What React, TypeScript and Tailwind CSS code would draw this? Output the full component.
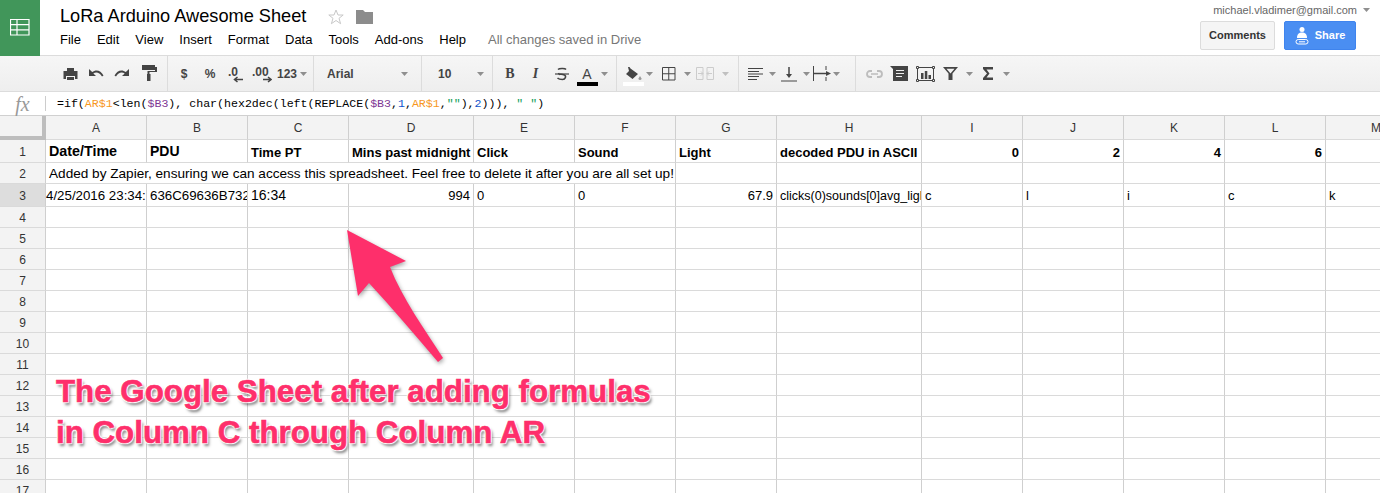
const Caret = ({ className = "" }: { className?: string }) => (
  <span className={`flex justify-center ${className}`}>
    <svg width="7" height="4" viewBox="0 0 7 4"><path d="M0 0h7L3.500 4z" fill="#8f8f8f" /></svg>
  </span>
)

const Ic = ({ w, h = 16, children }: { w: number; h?: number; children: React.ReactNode }) => (
  <svg width={w} height={h} viewBox={`0 0 ${w} ${h}`} fill="none">{children}</svg>
)

const Slot = ({ className, children }: { className: string; children: React.ReactNode }) => (
  <div className={`flex items-center justify-center shrink-0 h-full ${className}`}>{children}</div>
)

const dark = "#444"

function Toolbar() {
  return (
    <div className="flex h-[36px] border-b border-[#dcdcdc] bg-gradient-to-b from-[#f6f6f6] to-[#eeeeee] text-[#444] font-bold text-[12px]">
      <div className="flex w-[168px] pl-[57px] border-r border-[#dcdcdc]">
        <Slot className="w-[26px]">
          <Ic w={15}><path d="M4 2h7v3h3.500v8H12v-3H3v3H.5V5H4z" fill={dark} /><path d="M4 11h7v3H4z" fill={dark} /></Ic>
        </Slot>
        <Slot className="w-[26px]">
          <Ic w={16}><path d="M1 3v7h7L5.300 7.400C8 5.700 11.700 6.300 14 10.500l1.500-1C13 4.300 8 3 4.200 6z" fill={dark} /></Ic>
        </Slot>
        <Slot className="w-[26px]">
          <Ic w={16}><path d="M15 3v7H8l2.700-2.600C8 5.700 4.300 6.300 2 10.500L.5 9.500C3 4.300 8 3 11.800 6z" fill={dark} /></Ic>
        </Slot>
        <Slot className="w-[28px]">
          <svg width="17" height="17" viewBox="0 0 17 17" fill="none"><path d="M1 0h13v5H1z" fill={dark} /><path d="M14 2h2v5H8.500v2H6.500V6H14z" fill={dark} /><path d="M6 9h3.500v7H6z" fill={dark} /></svg>
        </Slot>
      </div>

      <div className="flex w-[146px] pl-[3px] border-r border-[#dcdcdc]">
        <Slot className="w-[26px]">$</Slot>
        <Slot className="w-[26px]">%</Slot>
        <Slot className="w-[26px]">
          <svg width="18" height="18" viewBox="0 0 18 18" fill="none">
            <text x="1" y="11" fontFamily="Liberation Sans" fontWeight="700" fontSize="12" fill={dark}>.0</text>
            <path d="M16 14.500H8M10.500 12l-3 2.500 3 2.500" stroke={dark} strokeWidth="1.500" />
          </svg>
        </Slot>
        <Slot className="w-[26px]">
          <svg width="20" height="18" viewBox="0 0 20 18" fill="none">
            <text x="0" y="11" fontFamily="Liberation Sans" fontWeight="700" fontSize="12" fill={dark}>.00</text>
            <path d="M11 14.500h7M16 12l3 2.500-3 2.500" stroke={dark} strokeWidth="1.500" />
          </svg>
        </Slot>
        <Slot className="w-[24px]">123</Slot>
        <Slot className="w-[8px]"><Caret /></Slot>
      </div>

      <div className="flex items-center justify-between w-[108px] pl-[13px] pr-[13px] border-r border-[#dcdcdc]">
        <span>Arial</span>
        <Caret />
      </div>

      <div className="flex items-center justify-between w-[71px] pl-[16px] pr-[8px] border-r border-[#dcdcdc]">
        <span>10</span>
        <Caret />
      </div>

      <div className="flex w-[124px] pl-[4px] border-r border-[#dcdcdc]">
        <Slot className="w-[26px] text-[14px] font-['Liberation_Serif'] font-bold">B</Slot>
        <Slot className="w-[25px] text-[14px] font-['Liberation_Serif'] italic font-bold">I</Slot>
        <Slot className="w-[27px]">
          <Ic w={14}><path d="M3 3.500C4 2.500 10 2 11 3.500M3.500 7c1 3 1 0 6 2 2 1 1 4.500-2 4.500-2 0-4-.5-5-1.500" stroke={dark} strokeWidth="1.500" /><path d="M0 8h14" stroke={dark} strokeWidth="1.200" /></Ic>
        </Slot>
        <Slot className="w-[24px] flex-col">
          <span className="text-[14px] font-normal leading-[15px] mt-[6px]">A</span>
          <span className="w-[21px] h-[4px] bg-black" />
        </Slot>
        <Slot className="w-[10px]"><Caret /></Slot>
      </div>

      <div className="flex w-[122px] pl-[4px] border-r border-[#dcdcdc]">
        <Slot className="w-[24px] flex-col">
          <svg width="17" height="15" viewBox="0 0 17 15" className="mt-[5px]" fill="none">
            <path d="M3 0l1.500 0 1 1.500L13 7l-5.500 5L1 7l3-3z" fill={dark} />
            <path d="M15 9l1.500 2.500a1.500 1.500 0 1 1-3 0z" fill="#9a9a9a" />
          </svg>
          <span className="w-[21px] h-[4px] bg-white" />
        </Slot>
        <Slot className="w-[9px]"><Caret /></Slot>
        <Slot className="w-[20px] ml-[5px]">
          <Ic w={14} h={14}><path d="M.5.500h12.500v12.500H.5zM6.750.500v12.500M.5 6.750h12.500" stroke={dark} /></Ic>
        </Slot>
        <Slot className="w-[10px] ml-[3px]"><Caret /></Slot>
        <Slot className="w-[24px] ml-[1px]">
          <svg width="18" height="13" viewBox="0 0 18 13" fill="none">
            <path d="M.5.500h6.500v12H.5zM11 .500h6.500v12H11z" stroke="#ccc" />
            <path d="M2 6.500h5M5 4.500l2 2-2 2M16 6.500h-5M13 4.500l-2 2 2 2" stroke="#ccc" />
          </svg>
        </Slot>
        <Slot className="w-[8px] ml-[4px]"><Caret className="opacity-50" /></Slot>
      </div>

      <div className="flex w-[117px] pl-[8px] border-r border-[#dcdcdc]">
        <Slot className="w-[17px]">
          <Ic w={15} h={12}><path d="M0 .500h15M0 3.500h11M0 6h15M0 8.500h11M0 11.500h9" stroke={dark} /></Ic>
        </Slot>
        <Slot className="w-[9px] ml-[4px]"><Caret /></Slot>
        <Slot className="w-[17px] ml-[3px]">
          <Ic w={16}><path d="M8 1v9" stroke={dark} strokeWidth="1.500" /><path d="M5 8h6l-3 4z" fill={dark} /><path d="M0 15h16" stroke={dark} /></Ic>
        </Slot>
        <Slot className="w-[9px] ml-[5px]"><Caret /></Slot>
        <Slot className="w-[20px] ml-[1px]">
          <svg width="19" height="15" viewBox="0 0 19 15" fill="none"><path d="M.5 0v15M13 0v4M13 11v4" stroke={dark} /><path d="M1 7.500h13.500" stroke={dark} strokeWidth="1.500" /><path d="M13 5l5 2.500-5 2.500z" fill={dark} /></svg>
        </Slot>
        <Slot className="w-[8px]"><Caret /></Slot>
      </div>

      <div className="flex pl-[8px]">
        <Slot className="w-[20px]">
          <Ic w={17} h={8}><path d="M6 1H4a3 3 0 0 0 0 6h2M11 1h2a3 3 0 0 1 0 6h-2" stroke="#bdbdbd" strokeWidth="1.800" /><path d="M5 4h7" stroke="#bdbdbd" strokeWidth="1.500" /></Ic>
        </Slot>
        <Slot className="w-[18px] ml-[6px]">
          <svg width="18" height="15" viewBox="0 0 18 15" fill="none"><path d="M0 0h18v15H3V3z" fill={dark} /><path d="M6 4.500h8M6 7.500h8M6 10.500h6" stroke="#eee" /></svg>
        </Slot>
        <Slot className="w-[20px] ml-[7px]">
          <svg width="19" height="16" viewBox="0 0 19 16" fill="none">
            <path d="M1.500 1.500h16v13h-16z" stroke={dark} />
            <path d="M5 7h2.500v6H5zM8.800 5h2.500v8H8.800zM12.500 9H15v4h-2.500z" fill={dark} />
            <path d="M.5.500h2v2h-2zM16.500.500h2v2h-2zM.5 13.500h2v2h-2zM16.500 13.500h2v2h-2z" fill="#eee" stroke={dark} />
          </svg>
        </Slot>
        <Slot className="w-[16px] ml-[7px]">
          <Ic w={15} h={13}><path d="M0 0h15L9.500 6.500V13h-4V6.500zM3.500 1.800l4 4.700 4-4.700z" fill={dark} fillRule="evenodd" /></Ic>
        </Slot>
        <Slot className="w-[8px] ml-[7px]"><Caret /></Slot>
        <Slot className="w-[10px] ml-[10px]">
          <Ic w={10} h={13}><path d="M0 0h10v2.500H3.500L6.500 6.500 3.500 10.500H10V13H0V11l4-4.500L0 2z" fill={dark} /></Ic>
        </Slot>
        <Slot className="w-[8px] ml-[9px]"><Caret /></Slot>
      </div>
    </div>
  )
}

const cols = ["A", "B", "C", "D", "E", "F", "G", "H", "I", "J", "K", "L", "M"]

type Cell = { t?: string; cls?: string }

const bold = "font-bold text-[13px] pt-[4px]"
const plain = "text-[13px] pt-[2px]"

const row1: Cell[] = [
  { t: "Date/Time", cls: "font-bold text-[14.300px] pt-[2px]" },
  { t: "PDU", cls: "font-bold text-[14px] pt-[1px]" },
  { t: "Time PT", cls: bold },
  { t: "Mins past midnight", cls: bold },
  { t: "Click", cls: bold },
  { t: "Sound", cls: bold },
  { t: "Light", cls: bold },
  { t: "decoded PDU in ASCII", cls: bold },
  { t: "0", cls: `${bold} justify-end` },
  { t: "2", cls: `${bold} justify-end` },
  { t: "4", cls: `${bold} justify-end` },
  { t: "6", cls: `${bold} justify-end` },
  {},
]

const row2: Cell[] = [
  { t: "Added by Zapier, ensuring we can access this spreadsheet. Feel free to delete it after you are all set up!", cls: "col-span-6 text-[13.600px] pt-[2px]" },
  {},
  {},
  {},
  {},
  {},
  {},
  {},
]

const row3: Cell[] = [
  { t: "4/25/2016 23:34:", cls: "text-[13.300px] pt-[2px] !pl-0" },
  { t: "636C69636B732", cls: "text-[13.300px] pt-[2px]" },
  { t: "16:34", cls: "text-[14px]" },
  { t: "994", cls: `${plain} justify-end` },
  { t: "0", cls: plain },
  { t: "0", cls: plain },
  { t: "67.9", cls: `${plain} justify-end` },
  { t: "clicks(0)sounds[0]avg_light", cls: "text-[12.500px] pt-[2px]" },
  { t: "c", cls: plain },
  { t: "l", cls: plain },
  { t: "i", cls: plain },
  { t: "c", cls: plain },
  { t: "k", cls: plain },
]

const blank: Cell[] = cols.map(() => ({}))

const line = "border-r border-b border-r-[#cfcfcf] border-b-[#dadada]"
const head = "flex items-center justify-center pt-[1px] bg-[#f3f3f3] text-[12px] text-[#333]"

const Row = ({ n, cells = blank, hdr = "" }: { n: number; cells?: Cell[]; hdr?: string }) => (
  <>
    <div className={`${head} ${line} ${hdr}`}>{n}</div>
    {cells.map((cell, i) => (
      <div key={i} className={`${line} flex items-center overflow-hidden whitespace-nowrap px-[3px] text-black ${cell.cls ?? ""}`}>
        {cell.t}
      </div>
    ))}
  </>
)

export default function App() {
  return (
    <div className="relative w-[1380px] h-[493px] overflow-hidden bg-white font-['Liberation_Sans',Arial,sans-serif]">
      {/* title bar */}
      <div className="flex h-[56px] border-b border-[#dcdcdc]">
        <div className="flex items-center justify-center w-[40px] bg-[#41965a] shrink-0 -mb-[1px]">
          <svg width="20" height="17" viewBox="0 0 20 17" fill="none" className="-mt-[1px]">
            <path d="M.5.500h18.500v15.500H.5zM.5 5.700h18.500M.5 10.800h18.500M7 .500v15.500" stroke="#fff" strokeWidth="1.200" />
          </svg>
        </div>
        <div className="flex flex-col pl-[20px] pt-[5px] flex-1">
          <div className="flex items-center h-[24px]">
            <span className="text-[18.200px] text-black">LoRa Arduino Awesome Sheet</span>
            <svg width="16" height="16" viewBox="0 0 16 16" fill="none" className="ml-[22px]">
              <path d="M8 1l2 5h5.200l-4.200 3.300 1.600 5.400L8 11.500l-4.600 3.200L5 9.300.8 6H6z" stroke="#c8c8c8" />
            </svg>
            <svg width="17" height="14" viewBox="0 0 17 14" className="ml-[12px]">
              <path d="M0 0h7l2 2h8v12H0z" fill="#8c8c8c" />
            </svg>
          </div>
          <div className="flex items-center gap-[16px] h-[24px] mt-[-1px] text-[13px] text-black">
            <span>File</span>
            <span>Edit</span>
            <span>View</span>
            <span>Insert</span>
            <span>Format</span>
            <span>Data</span>
            <span>Tools</span>
            <span>Add-ons</span>
            <span>Help</span>
            <span className="text-[#777] ml-[6px]">All changes saved in Drive</span>
          </div>
        </div>
        <div className="flex flex-col items-end pr-[24px] pt-[3px]">
          <div className="flex items-center h-[14px] text-[11px] text-[#666] -mr-[14px]">
            <span>michael.vladimer@gmail.com</span>
            <Caret className="ml-[6px]" />
          </div>
          <div className="flex gap-[9px] mt-[4px]">
            <div className="flex items-center justify-center w-[75px] h-[29px] rounded-[2px] border border-[#dcdcdc] bg-[#f5f5f5] text-[11px] font-bold text-[#333]">Comments</div>
            <div className="flex items-center justify-center gap-[6px] w-[72px] h-[29px] rounded-[2px] border border-[#3f84ee] bg-[#4a8ef2] text-[11px] font-bold text-white">
              <svg width="14" height="18" viewBox="0 0 14 18" fill="none">
                <circle cx="7" cy="2.500" r="2.500" fill="#fff" />
                <path d="M2 11c0-4 2-5.500 5-5.500s5 1.500 5 5.500z" fill="#fff" />
                <rect x="1" y="12.500" width="12" height="4.500" rx="2.200" stroke="#fff" />
                <path d="M4 14.800h6" stroke="#fff" />
              </svg>
              <span>Share</span>
            </div>
          </div>
        </div>
      </div>

      <Toolbar />

      {/* formula bar */}
      <div className="flex items-center h-[24px] border-b border-[#d0d0d0]">
        <div className="flex justify-center w-[45px]">
          <span className="font-['Liberation_Serif'] italic text-[20px] leading-[20px] text-[#999]">fx</span>
        </div>
        <div className="w-px h-[15px] bg-[#ccc]" />
        <div className="pl-[11px] font-['Liberation_Mono',monospace] text-[11.600px] text-black whitespace-pre">
          =if(<span className="text-[#f7981d]">AR$1</span>&lt;len(<span className="text-[#7e3794]">$B3</span>), char(hex2dec(left(REPLACE(<span className="text-[#7e3794]">$B3</span>,<span className="text-[#1155cc]">1</span>,<span className="text-[#f7981d]">AR$1</span>,<span className="text-[#0f9d58]">""</span>),<span className="text-[#1155cc]">2</span>))), <span className="text-[#0f9d58]">" "</span>)
        </div>
      </div>

      {/* sheet */}
      <div className="grid grid-cols-[46px_101px_101px_101px_125px_101px_101px_101px_145px_101px_101px_101px_101px_101px] grid-rows-[24px_23px_21px_23px_repeat(14,21px)]">
        <div className={`${head} ${line} border-r-[4px] border-b-[4px] !border-r-[#bdbdbd] !border-b-[#bdbdbd]`} />
        {cols.map((c) => (
          <div key={c} className={`${head} ${line}`}>{c}</div>
        ))}
        <Row n={1} cells={row1} />
        <Row n={2} cells={row2} />
        <Row n={3} cells={row3} hdr="!bg-[#dddddd]" />
        {[4, 5, 6, 7, 8, 9, 10, 11, 12, 13, 14, 15, 16, 17].map((n) => (
          <Row key={n} n={n} />
        ))}
      </div>

      {/* annotation over the sheet */}
      <svg width="120" height="145" viewBox="340 225 120 145" className="absolute left-[340px] top-[225px] drop-shadow-[1px_2px_2px_rgba(0,0,0,0.35)]">
        <path d="M347 230L406 261L390 267C402 298 425 330 443 358L438 362C415 335 392 308 369 283L358 296z" fill="#fe2f6b" />
      </svg>
      <div className="absolute left-[56px] top-[371px] text-[31.300px] font-bold leading-[41px] whitespace-nowrap text-[#fe2f6b] [-webkit-text-stroke:0.6px_#fe2f6b] [text-shadow:0_0_2px_#fff,1px_1px_1px_#fff,-1px_-1px_1px_#fff,1px_-1px_1px_#fff,-1px_1px_1px_#fff,2px_3px_3px_rgba(0,0,0,0.5)]">
        <div>The Google Sheet after adding formulas</div>
        <div>in Column C through Column AR</div>
      </div>
    </div>
  )
}
